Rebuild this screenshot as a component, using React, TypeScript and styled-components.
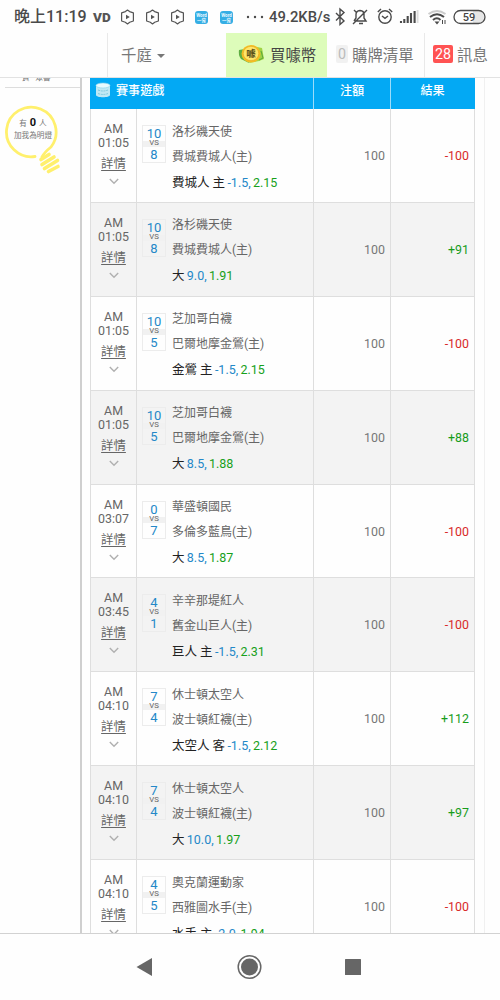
import React from "react";
import styled, { createGlobalStyle } from "styled-components";

const Global = createGlobalStyle`
  * { box-sizing: border-box; }
  html, body { margin: 0; padding: 0; background: #fefefe; }
  body { font-family: Roboto, "Noto Sans CJK TC", sans-serif; overflow: hidden; }
`;

const Screen = styled.div`
  width: 500px;
  height: 1000px;
  display: flex;
  flex-direction: column;
  overflow: hidden;
  background: #fefefe;
  color: #666;
`;

const StatusBar = styled.header`
  height: 33px;
  flex: none;
  display: flex;
  align-items: center;
  padding-left: 14px;
  color: #4a4a4a;
`;

const Clock = styled.span`
  width: 79px;
  font-size: 16px;
  font-weight: 500;
  line-height: 33px;
  white-space: nowrap;
`;

const VolteMark = styled.span`
  width: 27px;
  font-size: 13.5px;
  font-weight: 900;
  color: #555;
`;

const IconSlot = styled.span<{ $w: number }>`
  width: ${(p) => p.$w}px;
  flex: none;
  display: flex;
  align-items: center;
`;

const WordApp = styled.span`
  width: 13px;
  height: 13px;
  margin-top: 2px;
  border-radius: 3px;
  background: #35aee4;
  color: #e9f8ff;
  font-size: 4.5px;
  font-weight: 700;
  line-height: 5px;
  text-align: center;
  display: flex;
  flex-direction: column;
  justify-content: center;
`;

const Speed = styled.span`
  width: 65px;
  font-size: 14.8px;
  font-weight: 500;
  white-space: nowrap;
`;

const NavBar = styled.nav`
  height: 45px;
  flex: none;
  display: flex;
  border-bottom: 1px solid #e2e2e2;
  font-size: 15.4px;
  color: #777;
`;

const NavItem = styled.div<{ $w: number; $pad: number; $gap?: number; $active?: boolean; $line?: boolean }>`
  width: ${(p) => p.$w}px;
  flex: none;
  display: flex;
  align-items: center;
  gap: ${(p) => p.$gap ?? 0}px;
  padding-left: ${(p) => p.$pad}px;
  padding-bottom: 2px;
  white-space: nowrap;
  background: ${(p) => (p.$active ? "#ddfcba" : "transparent")};
  color: ${(p) => (p.$active ? "#444" : "#777")};
  border-left: ${(p) => (p.$line ? "1px solid #e9e9e9" : "0")};
`;

const Caret = styled.span`
  border: 4px solid transparent;
  border-top-color: #777;
  border-bottom: 0;
  margin-top: 3px;
`;

const Count = styled.span<{ $hot?: boolean }>`
  height: 18px;
  width: ${(p) => (p.$hot ? 20 : 12)}px;
  border-radius: 2px;
  display: flex;
  align-items: center;
  justify-content: center;
  font-size: 14.3px;
  background: ${(p) => (p.$hot ? "#ff5353" : "#f1f1f1")};
  color: ${(p) => (p.$hot ? "#fff" : "#bbb")};
`;

const Content = styled.main`
  height: 856px;
  flex: none;
  display: flex;
  overflow: hidden;
  border-bottom: 1px solid #d2d2d2;
`;

const Sidebar = styled.aside`
  width: 82px;
  flex: none;
  border-right: 2px solid #cfcfcf;
`;

const SideLabel = styled.div`
  height: 10px;
  margin: 0 0 0 5px;
  padding-left: 17px;
  display: flex;
  gap: 6px;
  overflow: hidden;
  font-size: 7.5px;
  line-height: 10px;
  border-bottom: 1px solid #ddd;
  span { margin-top: -5px; }
`;

const Beacon = styled.div`
  display: grid;
  margin: 17px 0 0 5px;
  width: 60px;
  height: 74px;
  > * { grid-area: 1 / 1; }
`;

const BeaconText = styled.div`
  padding: 12px 0 0 1px;
  width: 55px;
  text-align: center;
  font-size: 7.6px;
  line-height: 12px;
  color: #777;
  white-space: nowrap;
  b { font-size: 11px; color: #111; margin: 0 1px; }
`;

const Panel = styled.section`
  margin-left: 8px;
  width: 395px;
  flex: none;
  border-right: 1px solid #f0f0f0;
`;

const TableHead = styled.div`
  width: 385px;
  height: 31px;
  display: grid;
  grid-template-columns: 224px 77px 84px;
  background: #03a9f4;
  color: #fff;
  font-size: 12.1px;
  font-weight: 500;
  line-height: 26px;
  text-align: center;
`;

const HeadCell = styled.div<{ $title?: boolean }>`
  display: flex;
  gap: 5px;
  align-items: flex-start;
  justify-content: ${(p) => (p.$title ? "flex-start" : "center")};
  padding-left: ${(p) => (p.$title ? 5 : 0)}px;
  border-right: 1px solid #9cdcfa;
  &:last-child { border-right-color: #03a9f4; }
  svg { margin-top: 4px; }
`;

const Row = styled.div`
  width: 385px;
  height: 93.9px;
  display: grid;
  grid-template-columns: 46px 177px 77px 84px;
  border-bottom: 1px solid #dedede;
  border-left: 1px solid #dedede;
  font-size: 12.4px;
  &:nth-child(odd) { background: #f3f3f3; }
`;

const Cell = styled.div`
  border-right: 1px solid #dedede;
  min-width: 0;
`;

const TimeCell = styled(Cell)`
  display: flex;
  flex-direction: column;
  align-items: center;
  padding-top: 13px;
  line-height: 14px;
  svg { margin-top: 6px; }
`;

const Detail = styled.a`
  margin-top: 6px;
  line-height: 16px;
  text-decoration: underline;
  text-underline-offset: 2px;
`;

const GameCell = styled(Cell)`
  display: flex;
  padding: 16px 0 0 5px;
`;

const Score = styled.div`
  width: 24px;
  height: 38px;
  flex: none;
  display: flex;
  flex-direction: column;
  border: 1px solid #ececec;
  text-align: center;
  color: #2488c8;
  font-size: 13px;
  line-height: 15px;
`;

const Versus = styled.span`
  height: 7px;
  line-height: 4px;
  font-size: 7.8px;
  color: #666;
  background: #f1f1f1;
`;

const Teams = styled.div`
  margin: -5.5px 0 0 6px;
  line-height: 25px;
  white-space: nowrap;
`;

const Team = styled.div`
  font-size: 12px;
`;

const Bet = styled.div`
  color: #222;
  font-size: 12.5px;
`;

const Odds = styled.span<{ $c: string }>`
  color: ${(p) => p.$c};
  margin-left: 2.3px;
`;

const Amount = styled(Cell)<{ $c?: string }>`
  display: flex;
  align-items: center;
  justify-content: flex-end;
  padding-right: 5px;
  color: ${(p) => p.$c ?? "#777"};
`;

const SystemNav = styled.footer`
  flex: 1;
  display: flex;
  align-items: center;
  padding-left: 136px;
`;

const Hexagon = () => (
  <svg width="15" height="16" viewBox="0 0 15 16" fill="none" stroke="#555" strokeWidth="1.2">
    <path d="M7.5 1 9.600 2.600 13.400 3.900V12L9.700 13.300 7.500 15 5.300 13.300 1.600 12V3.900L5.400 2.600Z" strokeLinejoin="round" />
    <path d="M6 5.700v4.600L9.800 8Z" fill="#555" stroke="none" />
  </svg>
);

const Coin = () => (
  <svg width="27" height="22" viewBox="0 0 27 22">
    <path d="M1 7Q0 12 3 16l8 4-4-14Z" fill="#5dad42" />
    <path d="M19 4l5 1 2 11-5 2-10 2Z" fill="#a0d344" />
    <path d="m23 8 2 7-4 2" fill="none" stroke="#5ca93a" />
    <ellipse cx="13" cy="10.800" rx="9.500" ry="8.800" fill="#f4bd22" />
    <ellipse cx="13" cy="10.500" rx="7.800" ry="7.200" fill="#ffe66a" stroke="#e5ac24" strokeWidth=".7" />
    <text x="13" y="14" textAnchor="middle" fontSize="9.500" fontWeight="700" fill="#59501a">噱</text>
  </svg>
);

const Database = () => (
  <svg width="16" height="16" viewBox="0 0 16 16">
    <path d="M1 3v10c0 3 14 3 14 0V3Z" fill="#bfe8f4" />
    <ellipse cx="8" cy="3.500" rx="7" ry="2.500" fill="#e7faff" stroke="#8dd4ea" strokeWidth=".6" />
    <path d="M3 8q5 2 10 0M3 11.500q5 2 10 0" stroke="#7fc9de" strokeWidth="1" strokeDasharray="2 .8" fill="none" />
  </svg>
);

const Bulb = () => (
  <svg width="60" height="74" viewBox="0 0 60 74" fill="none" stroke="#fff06d" strokeLinecap="round">
    <path d="M30 51.500A24.800 24.800 0 1 1 46 42C41 46 39 48 37 52" strokeWidth="2.800" />
    <path d="m36 54.500 8-5M37 59.500l12-7.500M39.500 63.500l13-8M43.500 66.500l9.500-5" strokeWidth="3.600" />
  </svg>
);

const StatusIcons = () => (
  <svg width="165" height="24" viewBox="335 5 165 24" fill="none" stroke="#4a4a4a" strokeWidth="1.4">
    <path d="m337 13 8 8-4 3.500V9l4 3.500-8 8" />
    <path d="M356 21h11l-2-3v-4q0-3-4-3.500-4 .5-4 4V18l-2 3M360 23.500h4M354 24l14-14M355 10l3 3" />
    <circle cx="386" cy="17" r="6.200" />
    <path d="m378.800 12 3.200-3M393.200 12l-3.200-3M383 16l3 2.400 3-2.400" />
    <path d="M402 23v-2M405.300 23v-4M408.700 23v-7M412 23V13M415.600 23V11" strokeWidth="2.100" />
    <path d="M418.600 23V10" stroke="#ddd" strokeWidth="1.800" />
    <path d="M429.500 14q8.500-6 17 0" stroke="#ccc" strokeWidth="2" />
    <path d="M431 17q7-5.500 14 0M434 20q4-3.500 7.500 0" strokeWidth="2" />
    <path d="m435.500 21.500 2.500 3 2.500-3Z" fill="#4a4a4a" stroke="none" />
    <path d="M443.500 24v-4M446 20v4" strokeWidth="1" />
    <path d="M474 11h5q6 0 6 6t-6 6h-5Z" fill="#e6e6e6" stroke="none" />
    <rect x="455" y="10.500" width="31" height="13" rx="6.500" strokeWidth="1.300" />
    <text x="470" y="20.800" textAnchor="middle" fontSize="11" fontWeight="500" fill="#444" stroke="none">59</text>
  </svg>
);

const Chevron = () => (
  <svg width="10" height="7" viewBox="0 0 10 7" fill="none" stroke="#b0b0b0" strokeWidth="1.400">
    <path d="m.8 1 4.200 4.300L9.200 1" />
  </svg>
);

type Game = [string, string, string, string, string, string, string, string, string];

const games: Game[] = [
  ["01:05", "10", "8", "洛杉磯天使", "費城費城人(主)", "費城人 主", "-1.5", "2.15", "-100"],
  ["01:05", "10", "8", "洛杉磯天使", "費城費城人(主)", "大", "9.0", "1.91", "+91"],
  ["01:05", "10", "5", "芝加哥白襪", "巴爾地摩金鶯(主)", "金鶯 主", "-1.5", "2.15", "-100"],
  ["01:05", "10", "5", "芝加哥白襪", "巴爾地摩金鶯(主)", "大", "8.5", "1.88", "+88"],
  ["03:07", "0", "7", "華盛頓國民", "多倫多藍鳥(主)", "大", "8.5", "1.87", "-100"],
  ["03:45", "4", "1", "辛辛那堤紅人", "舊金山巨人(主)", "巨人 主", "-1.5", "2.31", "-100"],
  ["04:10", "7", "4", "休士頓太空人", "波士頓紅襪(主)", "太空人 客", "-1.5", "2.12", "+112"],
  ["04:10", "7", "4", "休士頓太空人", "波士頓紅襪(主)", "大", "10.0", "1.97", "+97"],
  ["04:10", "4", "5", "奧克蘭運動家", "西雅圖水手(主)", "水手 主", "-2.0", "1.94", "-100"],
];

export default function App() {
  return (
    <Screen>
      <Global />
      <StatusBar>
        <Clock>晚上11:19</Clock>
        <VolteMark>VD</VolteMark>
        {[0, 1, 2].map((i) => (
          <IconSlot $w={25} key={i}><Hexagon /></IconSlot>
        ))}
        <IconSlot $w={25}><WordApp><span>Word</span><span>一背</span></WordApp></IconSlot>
        <IconSlot $w={25}><WordApp><span>Word</span><span>一背</span></WordApp></IconSlot>
        <IconSlot $w={24}>
          <svg width="20" height="4"><g fill="#4a4a4a"><circle cx="3" cy="2" r="1.200" /><circle cx="10" cy="2" r="1.200" /><circle cx="17" cy="2" r="1.200" /></g></svg>
        </IconSlot>
        <Speed>49.2KB/s</Speed>
        <StatusIcons />
      </StatusBar>
      <NavBar>
        <NavItem $w={107} $pad={0} />
        <NavItem $w={119} $pad={13} $gap={5} $line>千庭<Caret /></NavItem>
        <NavItem $w={101} $pad={12} $gap={5} $active><Coin />買噱幣</NavItem>
        <NavItem $w={97} $pad={9} $gap={4}><Count>0</Count>購牌清單</NavItem>
        <NavItem $w={76} $pad={8} $gap={4} $line><Count $hot>28</Count>訊息</NavItem>
      </NavBar>
      <Content>
        <Sidebar>
          <SideLabel><span>賣</span><span>眾喜</span></SideLabel>
          <Beacon>
            <Bulb />
            <BeaconText>有 <b>0</b> 人<br />加我為明燈</BeaconText>
          </Beacon>
        </Sidebar>
        <Panel>
          <TableHead>
            <HeadCell $title><Database />賽事遊戲</HeadCell>
            <HeadCell>注額</HeadCell>
            <HeadCell>結果</HeadCell>
          </TableHead>
          {games.map(([time, away, home, awayTeam, homeTeam, pick, line, odds, result], i) => (
            <Row key={i}>
              <TimeCell>
                <span>AM</span>
                <span>{time}</span>
                <Detail>詳情</Detail>
                <Chevron />
              </TimeCell>
              <GameCell>
                <Score><span>{away}</span><Versus>VS</Versus><span>{home}</span></Score>
                <Teams>
                  <Team>{awayTeam}</Team>
                  <Team>{homeTeam}</Team>
                  <Bet>{pick}<Odds $c="#2488c8">{line},</Odds><Odds $c="#17a01b">{odds}</Odds></Bet>
                </Teams>
              </GameCell>
              <Amount>100</Amount>
              <Amount $c={result[0] === "+" ? "#179c1b" : "#d82a2a"}>{result}</Amount>
            </Row>
          ))}
        </Panel>
      </Content>
      <SystemNav>
        <svg width="228" height="28" viewBox="136 953 228 28" fill="#666">
          <path d="M136.500 967 152 958v18Z" />
          <circle cx="249.500" cy="967" r="11.300" fill="none" stroke="#666" strokeWidth="1.500" />
          <circle cx="249.500" cy="967" r="8.500" />
          <rect x="345" y="959" width="16" height="16" rx=".5" />
        </svg>
      </SystemNav>
    </Screen>
  );
}
